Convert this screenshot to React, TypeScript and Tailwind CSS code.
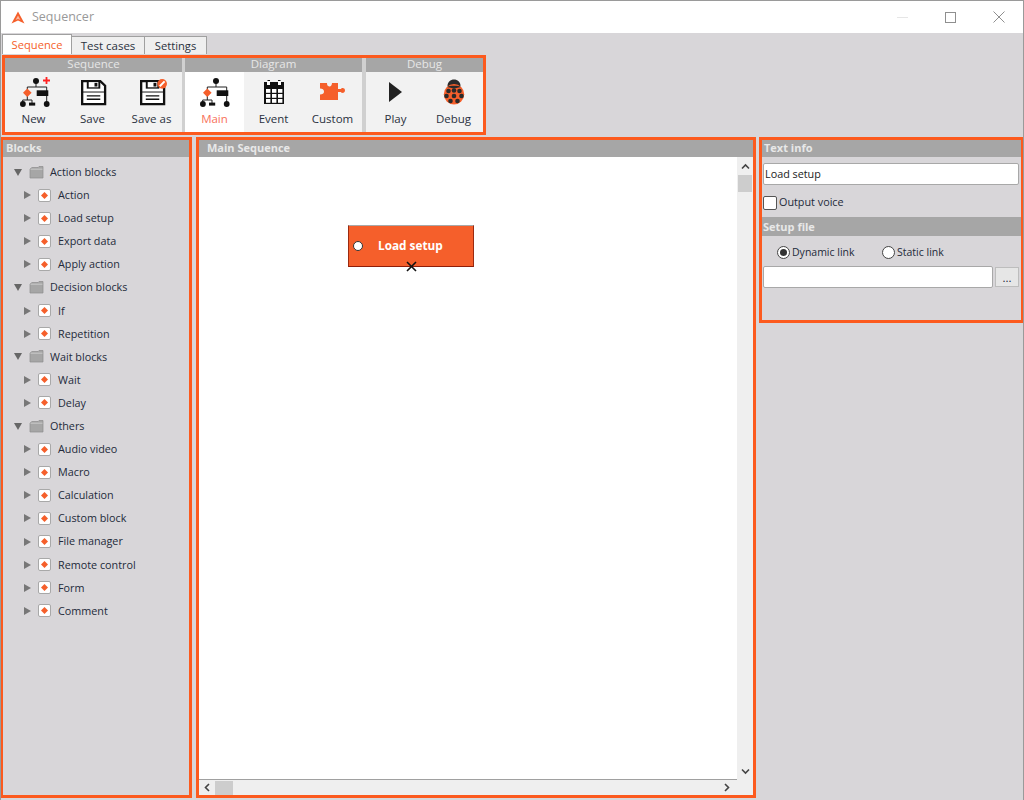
import React from "react";

const F = "font-['Open_Sans','Noto_Sans',sans-serif]";

function FlowIcon() {
  return (
    <svg width="32" height="32" viewBox="0 0 32 32" className="ml-[3px]">
      <g stroke="#222" strokeWidth="1" fill="none">
        <path d="M16 5V11M7.3 14V11H26.7V15M7.3 18V24M2.7 28V24H12V28M26.7 20V28" />
      </g>
      <circle cx="16" cy="5" r="3" fill="#111" />
      <path d="M7.3 12.4L11.6 16.7L7.3 21L3 16.7Z" fill="#f55f2b" />
      <rect x="16.7" y="14.3" width="11.6" height="5.7" fill="#111" />
      <circle cx="2.9" cy="28" r="2.9" fill="#111" />
      <rect x="9" y="26.6" width="6.2" height="3" fill="#111" />
      <circle cx="26.7" cy="28" r="2.9" fill="#111" />
    </svg>
  );
}

function Floppy({ badge }: { badge?: boolean }) {
  return (
    <svg width="27" height="27" viewBox="0 0 28 28" className="ml-[2px] mt-[1px]">
      <path d="M1.2 2.2H20L25 7V26H1.2Z" fill="#fff" stroke="#111" strokeWidth="2.4" />
      <path d="M6 2H20V10H6Z" fill="#111" />
      <rect x="8" y="3.2" width="10" height="5.4" fill="#fff" />
      <rect x="14" y="4" width="3" height="3.8" fill="#111" />
      <path d="M1 13H25V14H1Z" fill="#111" />
      <path d="M6 17.5H20M6 21H20" stroke="#111" strokeWidth="1.3" />
      {badge && (
        <g>
          <circle cx="23" cy="5" r="5" fill="#f55f2b" />
          <path d="M20.5 7.5L25.5 2.5" stroke="#fff" strokeWidth="2" />
        </g>
      )}
    </svg>
  );
}

function Calendar() {
  return (
    <svg width="24" height="26" viewBox="0 0 24 26">
      <rect x="2" y="4" width="20" height="21" fill="#111" />
      <path d="M2 3H5.5V1H8V3H16V1H18.5V3H22V8H2Z" fill="#111" />
      <rect x="5" y="2" width="3" height="4" fill="#fff" />
      <rect x="16" y="2" width="3" height="4" fill="#fff" />
      {[10, 15, 20].map((y) =>
        [4, 10, 16].map((x) => <rect key={`${x}-${y}`} x={x} y={y} width="4.4" height="3.8" fill="#fff" />)
      )}
    </svg>
  );
}

function Puzzle() {
  return (
    <svg width="27" height="22" viewBox="0 0 27 22">
      <path
        d="M1 2H8C8 5 9.5 5.4 10.5 5.4C12 5.4 13 4 13 2H19V8H22C22.5 6.6 26 6.6 26 9.5C26 12.4 22.5 12.4 22 11H19V19H1V13.5C3.5 13.5 5 12.8 5 10.5C5 8.4 3.5 7.5 1 7.5Z"
        fill="#f55f2b"
      />
    </svg>
  );
}

function Ladybug() {
  return (
    <svg width="24" height="26" viewBox="0 0 24 26">
      <path d="M5.5 7C5.5 3 8.5 0.5 12 0.5C15.5 0.5 18.5 3 18.5 7Z" fill="#2a2a2a" />
      <circle cx="12" cy="15.3" r="10.2" fill="#f55f2b" />
      <path d="M5 8C7 6.4 17 6.4 19 8L12 9.4Z" fill="#2a2a2a" />
      {[
        [6.5, 12],
        [12, 11.5],
        [17.5, 12],
        [4.5, 17],
        [12, 17],
        [19.5, 17],
        [8.5, 22],
        [15.5, 22],
      ].map(([x, y]) => (
        <circle key={`${x}-${y}`} cx={x} cy={y} r="2.3" fill="#2a2a2a" />
      ))}
    </svg>
  );
}

function Tool({ label, icon, active, nudge }: { label: string; icon: React.ReactNode; active?: boolean; nudge?: boolean }) {
  return (
    <div className={`flex w-[59px] flex-col items-center ${active ? "bg-white" : ""}`}>
      <div className="mt-[2px] flex h-[36px] items-center justify-center">{icon}</div>
      <div className={`h-[18px] text-[11.5px] leading-[18px] ${nudge ? "" : "pr-[2px]"} ${active ? "text-[#f8725a]" : "text-[#2a3140]"}`}>
        {label}
      </div>
    </div>
  );
}

function ToolGroup({ title, children }: { title: string; children: React.ReactNode }) {
  return (
    <div className="flex flex-col bg-[#f2f2f2]">
      <div className="h-[14px] bg-[#a6a6a6] text-center text-[11.5px] leading-[12px] text-[#e6e6e6]">{title}</div>
      <div className="flex h-[60px]">{children}</div>
    </div>
  );
}

function Header({ title, pad }: { title: string; pad: string }) {
  return (
    <div className={`h-[17px] shrink-0 bg-[#a6a6a6] text-[11px] font-bold leading-[16px] text-[#e8e8e8] ${pad}`}>{title}</div>
  );
}

function Group({ label }: { label: string }) {
  return (
    <div className="flex h-[23.1px] items-center pl-[10px]">
      <svg width="10" height="9" viewBox="0 0 10 9" className="shrink-0">
        <path d="M1 1H9L5 8Z" fill="#666" />
      </svg>
      <svg width="15" height="13" viewBox="0 0 15 13" className="ml-[6px] shrink-0">
        <path d="M1 3L3 1.5H9L10 0.5H14V12H1Z" fill="#a6a6a6" stroke="#8c8c8c" strokeWidth="0.7" />
        <path d="M1.5 3.2H13.5" stroke="#d8d8d8" strokeWidth="0.7" />
      </svg>
      <span className="ml-[6px] text-[10.8px] text-[#232a3a]">{label}</span>
    </div>
  );
}

function Leaf({ label }: { label: string }) {
  return (
    <div className="flex h-[23.1px] items-center pl-[20px]">
      <svg width="9" height="10" viewBox="0 0 9 10" className="shrink-0">
        <path d="M1 1L8 5L1 9Z" fill="#777" />
      </svg>
      <span className="ml-[6px] flex h-[13px] w-[13px] shrink-0 items-center justify-center rounded-[2px] border border-[#a8a8a8] bg-white">
        <svg width="7" height="7" viewBox="0 0 7 7">
          <path d="M3.5 0L7 3.5L3.5 7L0 3.5Z" fill="#f55f2b" />
        </svg>
      </span>
      <span className="ml-[7px] text-[10.8px] text-[#232a3a]">{label}</span>
    </div>
  );
}

const tree: [string, string[]][] = [
  ["Action blocks", ["Action", "Load setup", "Export data", "Apply action"]],
  ["Decision blocks", ["If", "Repetition"]],
  ["Wait blocks", ["Wait", "Delay"]],
  ["Others", ["Audio video", "Macro", "Calculation", "Custom block", "File manager", "Remote control", "Form", "Comment"]],
];

function Chevron({ d }: { d: string }) {
  return (
    <svg width="9" height="9" viewBox="0 0 9 9">
      <path d={d} fill="none" stroke="#444" strokeWidth="1.6" />
    </svg>
  );
}

export default function App() {
  return (
    <div className={`${F} flex h-[800px] w-[1024px] flex-col overflow-hidden border border-b-0 border-[#9a9a9a] bg-[#d8d6d9]`}>
      <div className="flex h-[32px] shrink-0 items-center bg-white">
        <svg width="14" height="13" viewBox="0 0 14 13" className="ml-[10px]">
          <path d="M7 0.5L13.5 12.5L7 9.5L0.5 12.5Z" fill="#f55f2b" />
          <path d="M7 4.5L9.5 9L7 8L4.5 9Z" fill="#fff" opacity="0.55" />
        </svg>
        <span className="ml-[7px] text-[12.5px] text-[#999]">Sequencer</span>
        <div className="ml-auto flex items-center">
          <div className="mr-[37px] h-[1px] w-[11px] bg-[#e6e6e6]" />
          <div className="mr-[37px] h-[11px] w-[11px] border border-[#8f8f8f]" />
          <svg width="12" height="12" viewBox="0 0 12 12" className="mr-[18px]">
            <path d="M0.5 0.5L11.5 11.5M11.5 0.5L0.5 11.5" stroke="#8f8f8f" strokeWidth="1" />
          </svg>
        </div>
      </div>

      <div className="flex h-[21px] shrink-0 items-end pl-[1px] text-[11.2px]">
        <div className="h-[20px] w-[70px] border border-b-0 border-[#a0a0a0] bg-white text-center leading-[20px] text-[#f55f2b]">Sequence</div>
        <div className="h-[18px] w-[73px] border border-l-0 border-b-0 border-[#a0a0a0] bg-[#efefef] text-center text-[11.5px] leading-[18px] text-[#2a3140]">Test cases</div>
        <div className="h-[18px] w-[62px] border border-l-0 border-b-0 border-[#a0a0a0] bg-[#efefef] text-center leading-[18px] text-[#2a3140]">Settings</div>
      </div>

      <div className="ml-[1px] mt-[1px] flex h-[80px] w-[484px] shrink-0 gap-[3px] border-[3px] border-[#fc5a1e] bg-[#d0d0d0]">
        <ToolGroup title="Sequence">
          <Tool label="New" icon={<div className="relative"><FlowIcon /><svg width="7" height="7" viewBox="0 0 7 7" className="absolute right-[2px] top-[1px]"><path d="M3.5 0V7M0 3.5H7" stroke="#f22" strokeWidth="1.8" /></svg></div>} />
          <Tool label="Save" icon={<Floppy />} />
          <Tool label="Save as" icon={<Floppy badge />} />
        </ToolGroup>
        <ToolGroup title="Diagram">
          <Tool label="Main" icon={<FlowIcon />} active nudge />
          <Tool label="Event" icon={<Calendar />} nudge />
          <Tool label="Custom" icon={<Puzzle />} nudge />
        </ToolGroup>
        <div className="ml-[1px]">
          <ToolGroup title="Debug">
            <div className="flex w-[117px]">
              <Tool label="Play" icon={<svg width="14" height="20" viewBox="0 0 14 20"><path d="M0 0L13 10L0 20Z" fill="#222" /></svg>} nudge />
              <div className="-ml-[1px]">
                <Tool label="Debug" icon={<Ladybug />} nudge />
              </div>
            </div>
          </ToolGroup>
        </div>
      </div>

      <div className="mt-[2px] flex h-[661px] shrink-0">
        <div className="-ml-[1px] flex h-full w-[192px] shrink-0 flex-col border-[3px] border-[#fc5a1e]">
          <Header title="Blocks" pad="pl-[3px]" />
          <div className="pt-[3.5px]">
            {tree.map(([g, items]) => (
              <div key={g}>
                <Group label={g} />
                {items.map((i) => (
                  <Leaf key={i} label={i} />
                ))}
              </div>
            ))}
          </div>
        </div>

        <div className="ml-[4px] flex h-full w-[560px] shrink-0 flex-col border-[3px] border-[#fc5a1e]">
          <Header title="Main Sequence" pad="pl-[8px]" />
          <div className="flex min-h-0 flex-1">
            <div className="relative flex-1 border-b border-[#a0a0a0] bg-white">
              <div className="absolute left-[149px] top-[68px] flex h-[42px] w-[126px] items-center border border-[#a8a8a8] border-b-[#8f1d08] border-l-[#9b2a10] border-r-[#9b2a10] bg-[#f55f2b]">
                <span className="ml-[4px] h-[10px] w-[10px] rounded-full border border-[#333] bg-white" />
                <span className="ml-[15px] text-[11.8px] font-bold text-white">Load setup</span>
                <svg width="11" height="11" viewBox="0 0 11 11" className="absolute left-[57px] top-[35px]">
                  <path d="M1 1L10 10M10 1L1 10" stroke="#111" strokeWidth="1.6" />
                </svg>
              </div>
            </div>
            <div className="flex w-[16px] flex-col items-center bg-[#efefef]">
              <div className="flex h-[18px] items-center justify-center"><Chevron d="M1 6.5L4.5 3L8 6.5" /></div>
              <div className="h-[17px] w-[14px] bg-[#cdcdcd]" />
              <div className="mt-auto flex h-[18px] items-center justify-center"><Chevron d="M1 2.5L4.5 6L8 2.5" /></div>
            </div>
          </div>
          <div className="flex h-[15px] shrink-0 items-center bg-[#efefef]">
            <div className="flex w-[16px] justify-center"><Chevron d="M6 1L2.5 4.5L6 8" /></div>
            <div className="h-[14px] w-[18px] bg-[#cdcdcd]" />
            <div className="ml-auto mr-[22px] flex w-[10px] justify-center"><Chevron d="M3 1L6.5 4.5L3 8" /></div>
          </div>
        </div>

        <div className="ml-[3px] flex h-[186px] w-[265px] shrink-0 flex-col border-[3px] border-[#fc5a1e] text-[10.8px] text-[#232a3a]">
          <Header title="Text info" pad="pl-[2px]" />
          <div className="ml-[1px] mt-[6px] h-[22px] w-[256px] rounded-[2px] border border-[#a8a8a8] bg-white pl-[1px] leading-[20px] text-[#222]">Load setup</div>
          <div className="ml-[1px] mt-[10px] flex h-[15px] items-center">
            <span className="h-[14px] w-[14px] rounded-[2px] border border-[#555] bg-white" />
            <span className="ml-[2px]">Output voice</span>
          </div>
          <div className="mt-[7px] h-[19px] bg-[#a6a6a6] pl-[1px] text-[11px] font-bold leading-[20px] text-[#e8e8e8]">Setup file</div>
          <div className="ml-[15px] mt-[9px] flex h-[15px] items-center text-[10.5px]">
            <span className="flex h-[13px] w-[13px] items-center justify-center rounded-full border border-[#444] bg-white">
              <span className="h-[7px] w-[7px] rounded-full bg-[#333]" />
            </span>
            <span className="ml-[2px] w-[90px]">Dynamic link</span>
            <span className="h-[13px] w-[13px] rounded-full border border-[#444] bg-white" />
            <span className="ml-[2px]">Static link</span>
          </div>
          <div className="ml-[1px] mt-[6px] flex items-center">
            <div className="h-[22px] w-[230px] rounded-[2px] border border-[#a8a8a8] bg-white" />
            <div className="ml-[2px] h-[20px] w-[24px] border border-[#bdbdbd] bg-[#e6e6e6] text-center leading-[19px] text-[11.5px]">...</div>
          </div>
        </div>
      </div>
    </div>
  );
}
